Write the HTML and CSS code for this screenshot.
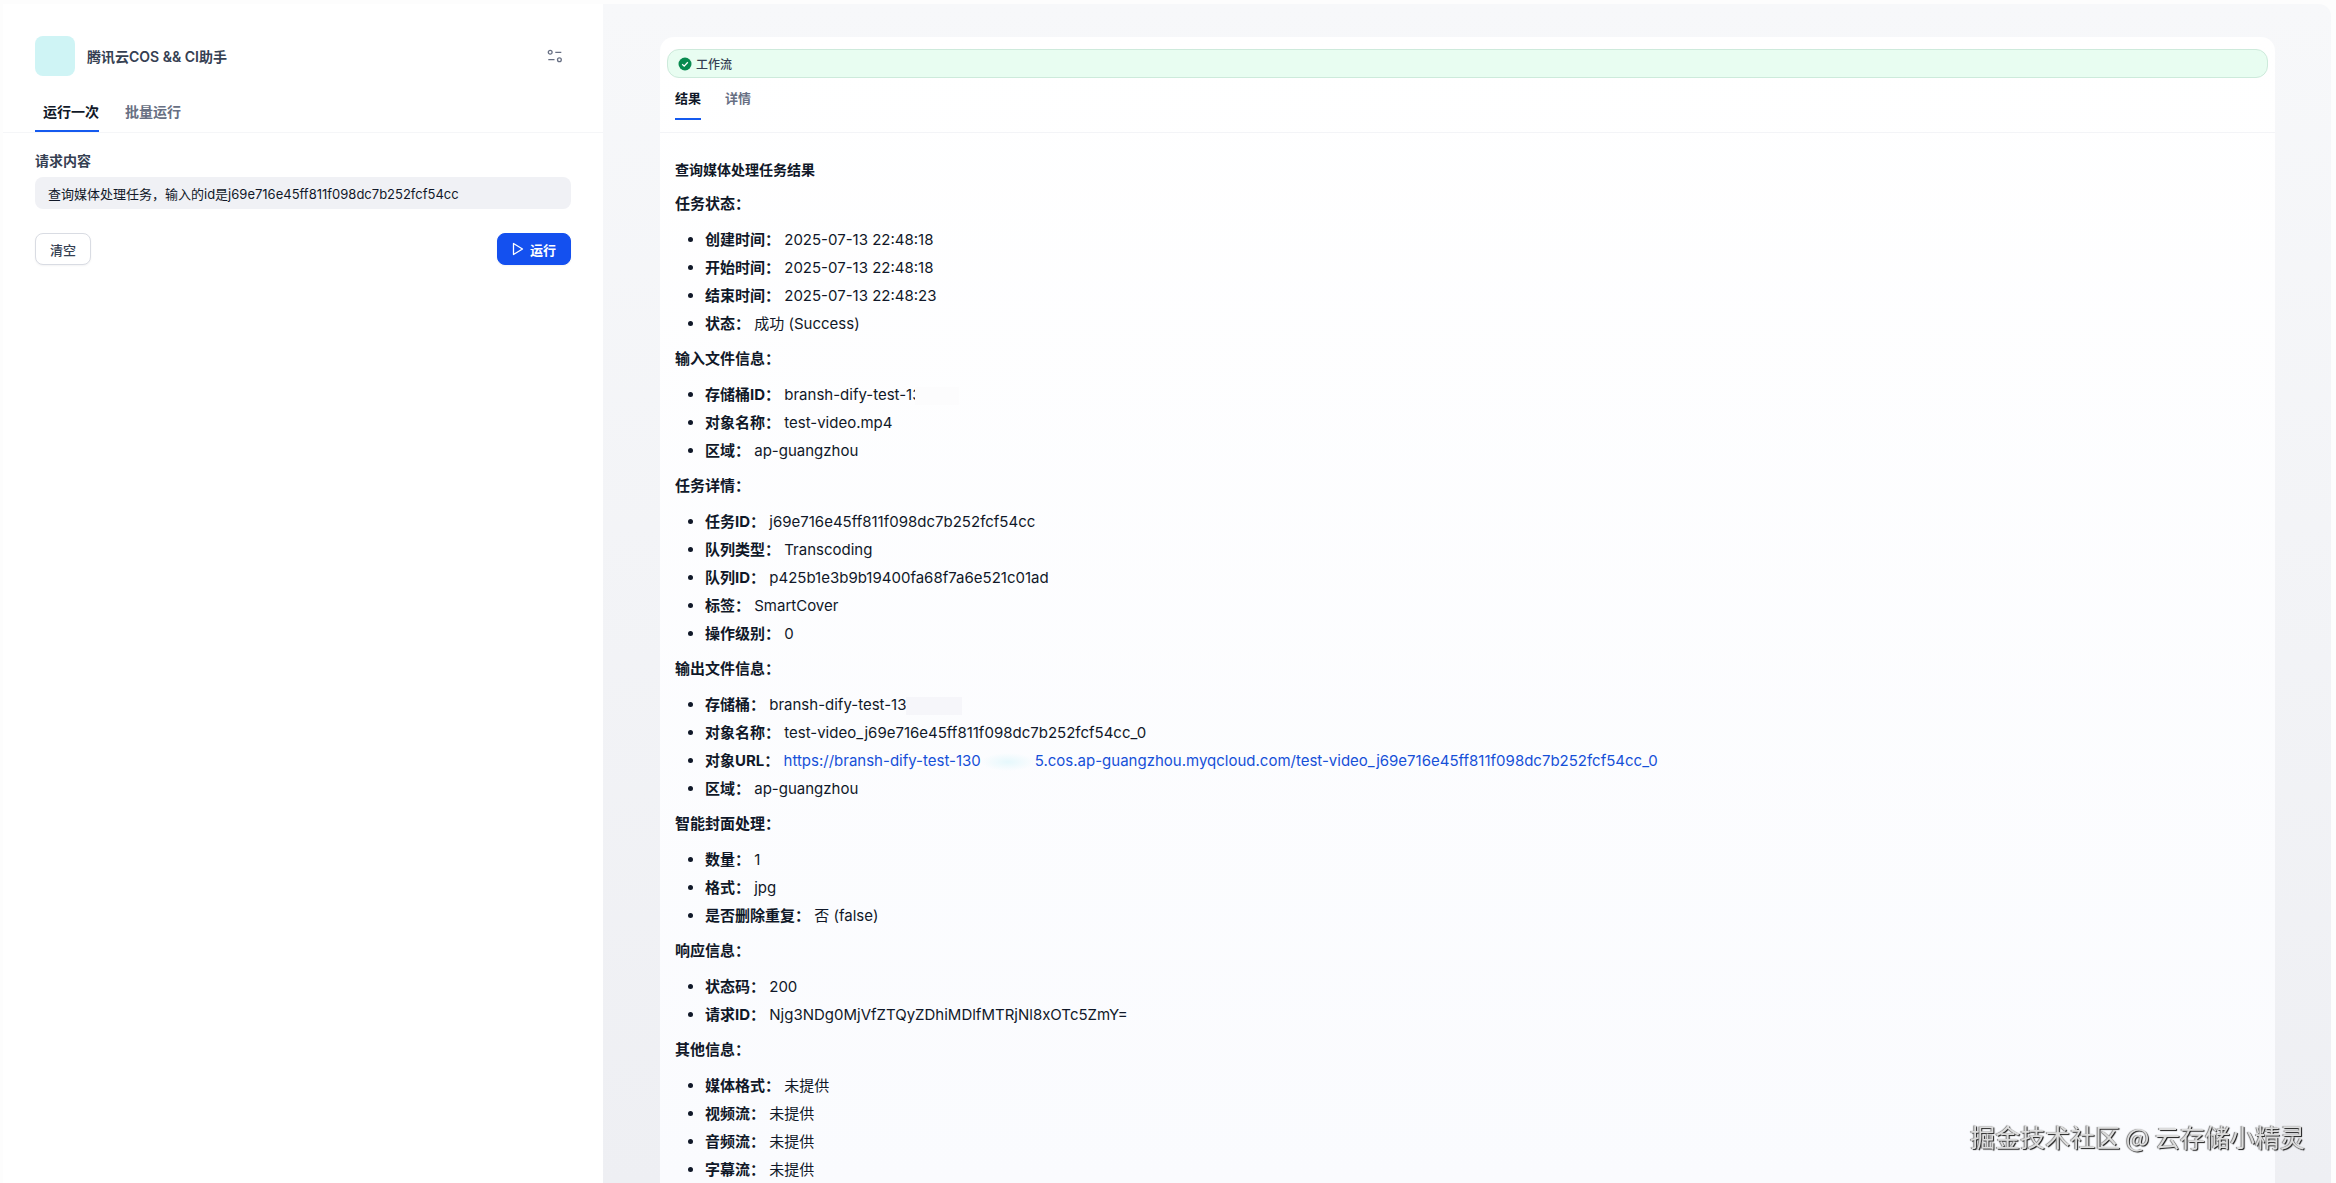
FILE: index.html
```html
<!DOCTYPE html>
<html lang="zh-CN">
<head>
    <meta charset="UTF-8">
    <meta name="viewport" content="width=device-width, initial-scale=1.0">
    <title>腾讯云COS && CI助手</title>
    <link rel="stylesheet" href="styles.css">
</head>
<body>
    <div class="app">
        <aside class="side">
            <header class="side-header">
                <div class="app-icon"></div>
                <h1>腾讯云COS &amp;&amp; CI助手</h1>
                <button type="button" class="settings-btn" aria-label="设置">
                    <svg width="16" height="16" viewBox="0 0 16 16" fill="none" stroke="#676f83" stroke-width="1.3">
                        <circle cx="3.2" cy="4.3" r="1.9"/>
                        <path d="M8.3 4.3h6M1.3 11.7h6.2"/>
                        <circle cx="12.4" cy="11.7" r="1.9"/>
                    </svg>
                </button>
            </header>
            <nav class="side-tabs">
                <button type="button" class="side-tab active">运行一次</button>
                <button type="button" class="side-tab">批量运行</button>
            </nav>
            <form class="run-form">
                <label for="query">请求内容</label>
                <input type="text" id="query" value="查询媒体处理任务，输入的id是j69e716e45ff811f098dc7b252fcf54cc">
                <div class="form-actions">
                    <button type="button" class="btn">清空</button>
                    <button type="button" class="btn btn-primary">
                        <svg width="12" height="14" viewBox="0 0 12 14" fill="none" stroke="currentColor" stroke-width="1.3" stroke-linejoin="round">
                            <path d="M1.5 1.5v11L10.5 7z"/>
                        </svg>
                        运行
                    </button>
                </div>
            </form>
        </aside>

        <main class="main">
            <section class="card">
                <div class="workflow">
                    <svg width="14" height="14" viewBox="0 0 14 14">
                        <circle cx="7" cy="7" r="6.5" fill="#088a4f"/>
                        <path d="M4.2 7.2l2 1.9 3.6-3.9" fill="none" stroke="#fff" stroke-width="1.3"/>
                    </svg>
                    <span>工作流</span>
                </div>
                <nav class="result-tabs">
                    <button type="button" class="result-tab active">结果</button>
                    <button type="button" class="result-tab">详情</button>
                </nav>
                <article class="result">
                    <h2>查询媒体处理任务结果</h2>

                    <h3>任务状态：</h3>
                    <ul>
                        <li><strong>创建时间：</strong> 2025-07-13 22:48:18</li>
                        <li><strong>开始时间：</strong> 2025-07-13 22:48:18</li>
                        <li><strong>结束时间：</strong> 2025-07-13 22:48:23</li>
                        <li><strong>状态：</strong> 成功 (Success)</li>
                    </ul>

                    <h3>输入文件信息：</h3>
                    <ul>
                        <li><strong>存储桶ID：</strong> bransh-dify-test-13<span class="mask mask-light"></span></li>
                        <li><strong>对象名称：</strong> test-video.mp4</li>
                        <li><strong>区域：</strong> ap-guangzhou</li>
                    </ul>

                    <h3>任务详情：</h3>
                    <ul>
                        <li><strong>任务ID：</strong> j69e716e45ff811f098dc7b252fcf54cc</li>
                        <li><strong>队列类型：</strong> Transcoding</li>
                        <li><strong>队列ID：</strong> p425b1e3b9b19400fa68f7a6e521c01ad</li>
                        <li><strong>标签：</strong> SmartCover</li>
                        <li><strong>操作级别：</strong> 0</li>
                    </ul>

                    <h3>输出文件信息：</h3>
                    <ul>
                        <li><strong>存储桶：</strong> bransh-dify-test-13<span class="mask"></span></li>
                        <li><strong>对象名称：</strong> test-video_j69e716e45ff811f098dc7b252fcf54cc_0</li>
                        <li><strong>对象URL：</strong> <a href="#">https://bransh-dify-test-130<span class="mask mask-blue"></span>5.cos.ap-guangzhou.myqcloud.com/test-video_j69e716e45ff811f098dc7b252fcf54cc_0</a></li>
                        <li><strong>区域：</strong> ap-guangzhou</li>
                    </ul>

                    <h3>智能封面处理：</h3>
                    <ul>
                        <li><strong>数量：</strong> 1</li>
                        <li><strong>格式：</strong> jpg</li>
                        <li><strong>是否删除重复：</strong> 否 (false)</li>
                    </ul>

                    <h3>响应信息：</h3>
                    <ul>
                        <li><strong>状态码：</strong> 200</li>
                        <li><strong>请求ID：</strong> Njg3NDg0MjVfZTQyZDhiMDlfMTRjNl8xOTc5ZmY=</li>
                    </ul>

                    <h3>其他信息：</h3>
                    <ul>
                        <li><strong>媒体格式：</strong> 未提供</li>
                        <li><strong>视频流：</strong> 未提供</li>
                        <li><strong>音频流：</strong> 未提供</li>
                        <li><strong>字幕流：</strong> 未提供</li>
                    </ul>
                </article>
            </section>
        </main>
    </div>
    <div class="watermark">掘金技术社区 @ 云存储小精灵</div>
</body>
</html>
```
FILE: styles.css
```css
* {
    box-sizing: border-box;
}

body {
    margin: 0;
    font-family: Inter, "Noto Sans CJK SC", sans-serif;
    font-size: 15px;
    color: #101828;
    background-color: #fdfdfd;
}

button,
input {
    font-family: inherit;
    color: inherit;
}

button {
    padding: 0;
    border: none;
    background: none;
    cursor: pointer;
}

.app {
    display: flex;
    height: 100vh;
    padding: 4px 5px 0 3px;
    overflow: hidden;
}

/* left panel */
.side {
    flex: 0 0 600px;
    background-color: #fff;
}

.side-header {
    display: flex;
    align-items: center;
    gap: 12px;
    padding: 32px 40px 0 32px;
}

.app-icon {
    width: 40px;
    height: 40px;
    border-radius: 8px;
    background-color: #cff4f5;
}

h1 {
    flex: 1;
    margin: 0;
    font-size: 14px;
    font-weight: 600;
    color: #354052;
}

.settings-btn {
    display: flex;
}

.side-tabs {
    display: flex;
    gap: 26px;
    margin-top: 16px;
    padding: 0 32px;
    border-bottom: 1px solid #f5f6f8;
}

.side-tab {
    height: 40px;
    border-bottom: 2px solid transparent;
    font-size: 14px;
    font-weight: 600;
    color: #676f83;
}

.side-tab.active {
    padding-left: 8px;
    border-color: #155aef;
    color: #101828;
}

.run-form {
    padding: 16px 32px;
}

.run-form label {
    display: block;
    font-size: 14px;
    font-weight: 600;
    line-height: 24px;
    color: #354052;
}

.run-form input {
    width: 100%;
    height: 32px;
    margin-top: 4px;
    padding: 0 13px;
    border: none;
    border-radius: 8px;
    background-color: #f0f1f5;
    font-size: 13px;
}

.form-actions {
    display: flex;
    justify-content: space-between;
    margin-top: 24px;
}

.btn {
    display: flex;
    align-items: center;
    gap: 6px;
    height: 32px;
    padding: 0 14px;
    border: 1px solid #d9dce3;
    border-radius: 8px;
    background-color: #fff;
    font-size: 13px;
    font-weight: 500;
    color: #354052;
    box-shadow: 0 1px 2px rgba(16, 24, 40, 0.05);
}

.btn-primary {
    border-color: #1450ef;
    background-color: #1450ef;
    font-weight: 600;
    color: #fff;
}

/* right panel */
.main {
    flex: 1;
    min-width: 0;
    padding: 33px 56px 0 57px;
    background: linear-gradient(#f7f8fa, #eeeff3);
    border-top-right-radius: 12px;
}

.card {
    height: 100%;
    padding-top: 12px;
    border-radius: 14px 14px 0 0;
    background: linear-gradient(#fff, #fafbfe);
}

.workflow {
    display: flex;
    align-items: center;
    gap: 4px;
    height: 29px;
    margin: 0 7px;
    padding: 0 10px;
    border: 1px solid #cdeadb;
    border-radius: 12px;
    background-color: #e8fdf1;
    font-size: 12px;
    font-weight: 500;
    color: #354052;
}

.result-tabs {
    display: flex;
    gap: 24px;
    padding: 0 15px 12px;
    border-bottom: 1px solid #f3f4f7;
}

.result-tab {
    height: 42px;
    padding-bottom: 2px;
    border-bottom: 2px solid transparent;
    font-size: 13px;
    font-weight: 600;
    color: #676f83;
}

.result-tab.active {
    border-color: #155aef;
    color: #101828;
}

.result {
    padding: 25px 15px 0;
    line-height: 24px;
}

h2,
h3 {
    margin: 0;
    font-size: 15px;
    font-weight: 700;
}

h2 {
    margin-bottom: 10px;
    font-size: 14px;
}

.result ul {
    margin: 12px 0 11px;
    padding-left: 30px;
}

.result li + li {
    margin-top: 4px;
}

.result a {
    color: #1650d8;
    text-decoration: none;
}

/* blanked out account ids */
.mask {
    display: inline-block;
    width: 56px;
    height: 18px;
    vertical-align: middle;
    background-color: #f6f6fa;
}

.mask-light {
    width: 44px;
    margin-left: -6px;
    background-color: #fcfcfd;
}

.mask-blue {
    width: 54px;
    background: radial-gradient(closest-side, #e6f8fc, transparent);
}

.watermark {
    position: fixed;
    right: 31px;
    bottom: 29px;
    font-family: "Noto Sans CJK SC", sans-serif;
    font-size: 25px;
    line-height: 36px;
    color: #dcdcdc;
    text-shadow: -1px 0 1px #777, 1px 1px 1px #111;
}
```
